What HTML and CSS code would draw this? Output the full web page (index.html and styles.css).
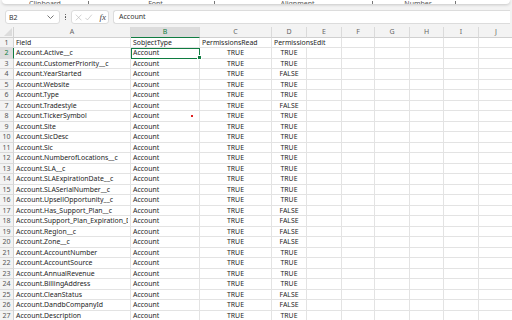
FILE: index.html
```html
<!DOCTYPE html>
<html>
<head>
<meta charset="utf-8">
<link rel="stylesheet" href="styles.css">
</head>
<body>
<div class="ribbon">
  <div class="grp g1"><span class="lbl">Clipboard</span><i class="launch"></i></div>
  <div class="grp g2"><span class="lbl">Font</span><i class="launch"></i></div>
  <div class="grp g3"><span class="lbl">Alignment</span><i class="launch"></i></div>
  <div class="grp g4"><span class="lbl">Number</span><i class="launch"></i></div>
</div>
<div class="fbar">
  <div class="namebox"><span>B2</span><svg class="chev" width="7" height="4" viewBox="0 0 7 4"><path d="M0.5 0.5L3.5 3.5L6.5 0.5" fill="none" stroke="#666" stroke-width="0.9"/></svg></div>
  <div class="vdots"><i></i><i></i><i></i></div>
  <div class="fxbox">
    <svg width="9" height="9" viewBox="0 0 9 9"><path d="M1 1L8 8M8 1L1 8" stroke="#b8b8b8" stroke-width="0.8"/></svg>
    <svg width="9" height="9" viewBox="0 0 9 9"><path d="M0.5 5L3 7.5L8.5 1" fill="none" stroke="#b8b8b8" stroke-width="0.8"/></svg>
    <span class="fx">fx</span>
  </div>
  <div class="finput">Account</div>
</div>
<div class="sheet">
  <div class="r hdr"><div class="corner"><i></i></div><div class="ch">A</div><div class="ch sel">B</div><div class="ch">C</div><div class="ch">D</div><div class="ch">E</div><div class="ch">F</div><div class="ch">G</div><div class="ch">H</div><div class="ch">I</div><div class="ch">J</div></div>
  <div class="r"><div class="rh">1</div><div class="c">Field</div><div class="c">SobjectType</div><div class="c">PermissionsRead</div><div class="c span2">PermissionsEdit</div><div class="c"></div><div class="c"></div><div class="c"></div><div class="c"></div><div class="c"></div></div>
  <div class="r"><div class="rh rsel">2</div><div class="c">Account.Active__c</div><div class="c active">Account</div><div class="c m">TRUE</div><div class="c m">TRUE</div><div class="c"></div><div class="c"></div><div class="c"></div><div class="c"></div><div class="c"></div><div class="c"></div></div>
  <div class="r"><div class="rh">3</div><div class="c">Account.CustomerPriority__c</div><div class="c">Account</div><div class="c m">TRUE</div><div class="c m">TRUE</div><div class="c"></div><div class="c"></div><div class="c"></div><div class="c"></div><div class="c"></div><div class="c"></div></div>
  <div class="r"><div class="rh">4</div><div class="c">Account.YearStarted</div><div class="c">Account</div><div class="c m">TRUE</div><div class="c m">FALSE</div><div class="c"></div><div class="c"></div><div class="c"></div><div class="c"></div><div class="c"></div><div class="c"></div></div>
  <div class="r"><div class="rh">5</div><div class="c">Account.Website</div><div class="c">Account</div><div class="c m">TRUE</div><div class="c m">TRUE</div><div class="c"></div><div class="c"></div><div class="c"></div><div class="c"></div><div class="c"></div><div class="c"></div></div>
  <div class="r"><div class="rh">6</div><div class="c">Account.Type</div><div class="c">Account</div><div class="c m">TRUE</div><div class="c m">TRUE</div><div class="c"></div><div class="c"></div><div class="c"></div><div class="c"></div><div class="c"></div><div class="c"></div></div>
  <div class="r"><div class="rh">7</div><div class="c">Account.Tradestyle</div><div class="c">Account</div><div class="c m">TRUE</div><div class="c m">FALSE</div><div class="c"></div><div class="c"></div><div class="c"></div><div class="c"></div><div class="c"></div><div class="c"></div></div>
  <div class="r"><div class="rh">8</div><div class="c">Account.TickerSymbol</div><div class="c note">Account</div><div class="c m">TRUE</div><div class="c m">TRUE</div><div class="c"></div><div class="c"></div><div class="c"></div><div class="c"></div><div class="c"></div><div class="c"></div></div>
  <div class="r"><div class="rh">9</div><div class="c">Account.Site</div><div class="c">Account</div><div class="c m">TRUE</div><div class="c m">TRUE</div><div class="c"></div><div class="c"></div><div class="c"></div><div class="c"></div><div class="c"></div><div class="c"></div></div>
  <div class="r"><div class="rh">10</div><div class="c">Account.SicDesc</div><div class="c">Account</div><div class="c m">TRUE</div><div class="c m">TRUE</div><div class="c"></div><div class="c"></div><div class="c"></div><div class="c"></div><div class="c"></div><div class="c"></div></div>
  <div class="r"><div class="rh">11</div><div class="c">Account.Sic</div><div class="c">Account</div><div class="c m">TRUE</div><div class="c m">TRUE</div><div class="c"></div><div class="c"></div><div class="c"></div><div class="c"></div><div class="c"></div><div class="c"></div></div>
  <div class="r"><div class="rh">12</div><div class="c">Account.NumberofLocations__c</div><div class="c">Account</div><div class="c m">TRUE</div><div class="c m">TRUE</div><div class="c"></div><div class="c"></div><div class="c"></div><div class="c"></div><div class="c"></div><div class="c"></div></div>
  <div class="r"><div class="rh">13</div><div class="c">Account.SLA__c</div><div class="c">Account</div><div class="c m">TRUE</div><div class="c m">TRUE</div><div class="c"></div><div class="c"></div><div class="c"></div><div class="c"></div><div class="c"></div><div class="c"></div></div>
  <div class="r"><div class="rh">14</div><div class="c">Account.SLAExpirationDate__c</div><div class="c">Account</div><div class="c m">TRUE</div><div class="c m">TRUE</div><div class="c"></div><div class="c"></div><div class="c"></div><div class="c"></div><div class="c"></div><div class="c"></div></div>
  <div class="r"><div class="rh">15</div><div class="c">Account.SLASerialNumber__c</div><div class="c">Account</div><div class="c m">TRUE</div><div class="c m">TRUE</div><div class="c"></div><div class="c"></div><div class="c"></div><div class="c"></div><div class="c"></div><div class="c"></div></div>
  <div class="r"><div class="rh">16</div><div class="c">Account.UpsellOpportunity__c</div><div class="c">Account</div><div class="c m">TRUE</div><div class="c m">TRUE</div><div class="c"></div><div class="c"></div><div class="c"></div><div class="c"></div><div class="c"></div><div class="c"></div></div>
  <div class="r"><div class="rh">17</div><div class="c">Account.Has_Support_Plan__c</div><div class="c">Account</div><div class="c m">TRUE</div><div class="c m">FALSE</div><div class="c"></div><div class="c"></div><div class="c"></div><div class="c"></div><div class="c"></div><div class="c"></div></div>
  <div class="r"><div class="rh">18</div><div class="c"><span class="clip">Account.Support_Plan_Expiration_Date__c</span></div><div class="c">Account</div><div class="c m">TRUE</div><div class="c m">FALSE</div><div class="c"></div><div class="c"></div><div class="c"></div><div class="c"></div><div class="c"></div><div class="c"></div></div>
  <div class="r"><div class="rh">19</div><div class="c">Account.Region__c</div><div class="c">Account</div><div class="c m">TRUE</div><div class="c m">FALSE</div><div class="c"></div><div class="c"></div><div class="c"></div><div class="c"></div><div class="c"></div><div class="c"></div></div>
  <div class="r"><div class="rh">20</div><div class="c">Account.Zone__c</div><div class="c">Account</div><div class="c m">TRUE</div><div class="c m">FALSE</div><div class="c"></div><div class="c"></div><div class="c"></div><div class="c"></div><div class="c"></div><div class="c"></div></div>
  <div class="r"><div class="rh">21</div><div class="c">Account.AccountNumber</div><div class="c">Account</div><div class="c m">TRUE</div><div class="c m">TRUE</div><div class="c"></div><div class="c"></div><div class="c"></div><div class="c"></div><div class="c"></div><div class="c"></div></div>
  <div class="r"><div class="rh">22</div><div class="c">Account.AccountSource</div><div class="c">Account</div><div class="c m">TRUE</div><div class="c m">TRUE</div><div class="c"></div><div class="c"></div><div class="c"></div><div class="c"></div><div class="c"></div><div class="c"></div></div>
  <div class="r"><div class="rh">23</div><div class="c">Account.AnnualRevenue</div><div class="c">Account</div><div class="c m">TRUE</div><div class="c m">TRUE</div><div class="c"></div><div class="c"></div><div class="c"></div><div class="c"></div><div class="c"></div><div class="c"></div></div>
  <div class="r"><div class="rh">24</div><div class="c">Account.BillingAddress</div><div class="c">Account</div><div class="c m">TRUE</div><div class="c m">TRUE</div><div class="c"></div><div class="c"></div><div class="c"></div><div class="c"></div><div class="c"></div><div class="c"></div></div>
  <div class="r"><div class="rh">25</div><div class="c">Account.CleanStatus</div><div class="c">Account</div><div class="c m">TRUE</div><div class="c m">FALSE</div><div class="c"></div><div class="c"></div><div class="c"></div><div class="c"></div><div class="c"></div><div class="c"></div></div>
  <div class="r"><div class="rh">26</div><div class="c">Account.DandbCompanyId</div><div class="c">Account</div><div class="c m">TRUE</div><div class="c m">FALSE</div><div class="c"></div><div class="c"></div><div class="c"></div><div class="c"></div><div class="c"></div><div class="c"></div></div>
  <div class="r"><div class="rh">27</div><div class="c">Account.Description</div><div class="c">Account</div><div class="c m">TRUE</div><div class="c m">TRUE</div><div class="c"></div><div class="c"></div><div class="c"></div><div class="c"></div><div class="c"></div><div class="c"></div></div>
</div>
</body>
</html>
```
FILE: styles.css
```css
html, body {
  margin: 0;
  padding: 0;
}
body {
  width: 512px;
  height: 320px;
  overflow: hidden;
  background: #f3f3f3;
  font-family: "Noto Sans", "Open Sans", sans-serif;
  color: #222;
}

/* ribbon remnant */
.ribbon {
  height: 4px;
  margin: 0 2px;
  background: #fff;
  border-radius: 0 0 4px 4px;
  box-shadow: 0 1px 3px rgba(0,0,0,0.18);
  display: flex;
  overflow: hidden;
}
.grp {
  display: flex;
  align-items: flex-end;
  height: 4px;
}
.g1 { width: 95px; }
.g2 { width: 126px; }
.g3 { width: 158px; }
.g4 { width: 83px; }
.lbl {
  flex: 1;
  text-align: center;
  font-size: 7px;
  line-height: 8px;
  color: #555;
  margin-bottom: -4px;
}
.launch {
  width: 4px;
  height: 4px;
  margin: 0 4px -2px 0;
  border-left: 1px solid #777;
  border-bottom: 1px solid #777;
}

/* formula bar */
.fbar {
  height: 23px;
  box-sizing: border-box;
  padding: 6px 2px 3px 5px;
  display: flex;
  align-items: stretch;
}
.namebox {
  width: 55px;
  box-sizing: border-box;
  background: #fff;
  border: 1px solid #dcdcdc;
  border-radius: 3px;
  display: flex;
  align-items: center;
  justify-content: space-between;
  padding: 0 5px 0 3px;
  font-size: 7px;
  color: #333;
}
.vdots {
  width: 11px;
  display: flex;
  flex-direction: column;
  align-items: center;
  justify-content: center;
  gap: 1px;
}
.vdots i {
  width: 1.3px;
  height: 1.3px;
  background: #444;
  border-radius: 50%;
}
.fxbox {
  width: 38px;
  box-sizing: border-box;
  background: #fff;
  border: 1px solid #dcdcdc;
  border-radius: 3px;
  display: flex;
  align-items: center;
  gap: 3px;
  padding: 0 2px 0 3px;
}
.fx {
  font-family: "Liberation Serif", serif;
  font-style: italic;
  font-size: 9px;
  color: #444;
  margin-left: 4px;
}
.finput {
  flex: 1;
  margin-left: 4px;
  background: #fff;
  border: 1px solid #dcdcdc;
  border-right: none;
  border-radius: 3px 0 0 3px;
  font-size: 7px;
  line-height: 12px;
  padding-left: 5px;
  color: #333;
}

/* sheet */
.sheet {
  background: #fff;
}
.r {
  display: grid;
  grid-template-columns: 14px 117px 69px 72px 35px 35px 33px 35px 34px 35px 35px;
  height: 10.5px;
}
.c, .rh, .ch, .corner {
  box-sizing: border-box;
  border-right: 1px solid #e3e3e3;
  border-bottom: 1px solid #e3e3e3;
  font-size: 6.9px;
  line-height: 9.5px;
  white-space: nowrap;
  overflow: hidden;
}
.c {
  padding: 0 2px;
  color: #1e1e1e;
}
.clip {
  display: block;
  overflow: hidden;
  text-overflow: clip;
}
.c.m {
  text-align: center;
}
.span2 {
  grid-column: span 2;
}
.rh {
  background: #f3f3f3;
  color: #555;
  text-align: center;
  border-right-color: #d2d2d2;
  border-bottom-color: #dadada;
  font-size: 7px;
}
.rh.rsel {
  background: #dcdcdc;
  border-right: 1.5px solid #107c41;
  color: #107c41;
}
.hdr {
  background: #f3f3f3;
}
.ch {
  background: #f3f3f3;
  color: #666;
  text-align: center;
  border-right-color: #dadada;
  border-bottom-color: #d0d0d0;
  font-size: 7px;
}
.ch.sel {
  background: #dcdcdc;
  color: #107c41;
  border-bottom: 1.5px solid #107c41;
}
.corner {
  position: relative;
  background: #f3f3f3;
  border-right-color: #d2d2d2;
  border-bottom-color: #d0d0d0;
}
.corner i {
  position: absolute;
  right: 1px;
  bottom: 1px;
  width: 0;
  height: 0;
  border-left: 8px solid transparent;
  border-bottom: 8px solid #dcdcdc;
}
.active {
  position: relative;
  overflow: visible;
  outline: 1.5px solid #107c41;
  outline-offset: -1px;
  z-index: 2;
}
.active::after {
  content: "";
  position: absolute;
  right: -2.5px;
  bottom: -2.5px;
  width: 3px;
  height: 3px;
  background: #107c41;
  border: 1px solid #fff;
}
.note {
  position: relative;
}
.note::after {
  content: "";
  position: absolute;
  right: 6px;
  top: 4px;
  width: 2px;
  height: 2px;
  background: #e02020;
}
```
